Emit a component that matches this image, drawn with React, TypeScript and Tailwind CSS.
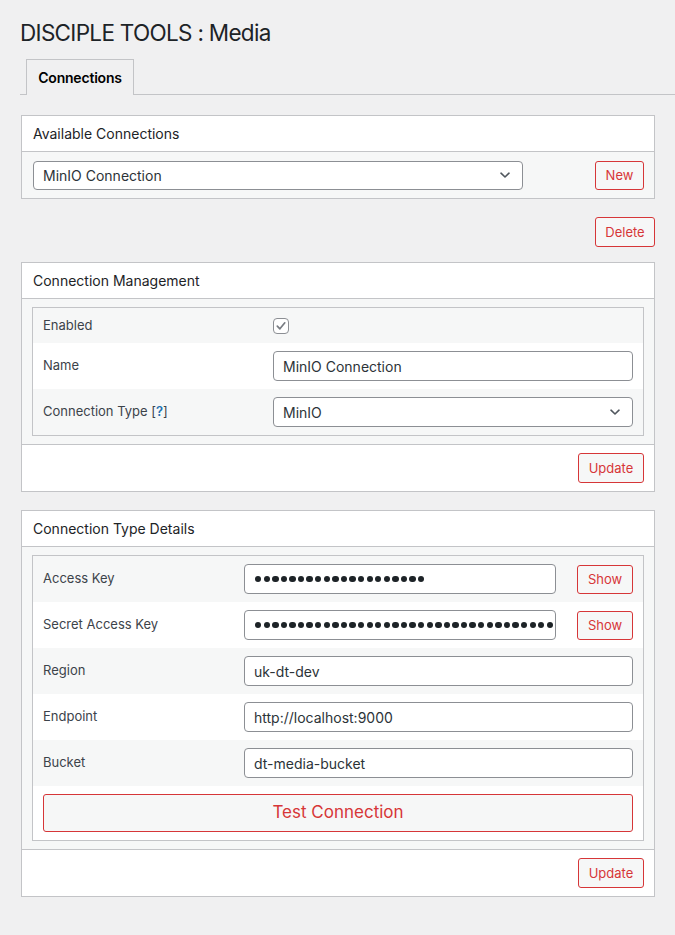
import React from "react";

const font = "font-['Inter','Noto_Sans',sans-serif]";

function cn(...c: (string | false | undefined)[]) {
  return c.filter(Boolean).join(" ");
}

function RedButton({ children, className }: { children: React.ReactNode; className?: string }) {
  return (
    <button
      type="button"
      className={cn(
        "h-[29px] rounded-[3px] border border-[#d63638] bg-[#f6f7f7] px-0 text-[13px] leading-none text-[#d63638]",
        className,
      )}
    >
      {children}
    </button>
  );
}

function Chevron() {
  return (
    <svg width="12" height="12" viewBox="0 0 12 12" className="absolute right-[11px] top-1/2 -translate-y-1/2">
      <path d="M2 4.2 L6 8 L10 4.2" fill="none" stroke="#50575e" strokeWidth="1.6" strokeLinecap="round" strokeLinejoin="round" />
    </svg>
  );
}

function FakeSelect({ value, className }: { value: string; className?: string }) {
  return (
    <div
      className={cn(
        "relative flex h-[29px] items-center rounded-[4px] border border-[#8c8f94] bg-white pl-[9px] text-[14px] text-[#2c3338]",
        className,
      )}
    >
      {value}
      <Chevron />
    </div>
  );
}

function TextBox({ value, className }: { value: string; className?: string }) {
  return (
    <div
      className={cn(
        "flex h-[30px] items-center overflow-hidden whitespace-nowrap rounded-[4px] border border-[#8c8f94] bg-white pl-[9px] text-[14px] text-[#2c3338]",
        className,
      )}
    >
      {value}
    </div>
  );
}

// password field: masked characters drawn as small dots
function SecretBox({ count, className }: { count: number; className?: string }) {
  return (
    <div
      className={cn(
        "flex h-[30px] items-center gap-[2.2px] overflow-hidden rounded-[4px] border border-[#8c8f94] bg-white pl-[10px]",
        className,
      )}
    >
      {Array.from({ length: count }).map((_, i) => (
        <span key={i} className="h-[6.4px] w-[6.4px] shrink-0 rounded-full bg-[#1d2327]" />
      ))}
    </div>
  );
}

function Panel({ title, children, footer }: { title: string; children: React.ReactNode; footer?: React.ReactNode }) {
  return (
    <div className="ml-px mr-[20px] border border-[#c3c4c7] bg-white">
      <div className="flex h-[36px] items-center border-b border-[#c3c4c7] px-[11px] text-[14px] text-[#1d2327]">
        {title}
      </div>
      {children}
      {footer && (
        <div className="flex h-[47px] items-center justify-end border-t border-[#c3c4c7] px-[10px]">{footer}</div>
      )}
    </div>
  );
}

function Row({ label, striped, children, tall = true }: { label: React.ReactNode; striped: boolean; children?: React.ReactNode; tall?: boolean }) {
  return (
    <div className={cn("flex items-center px-[10px]", tall ? "h-[46px]" : "h-[35px]", striped ? "bg-[#f6f7f7]" : "bg-white")}>
      {label}
      {children}
    </div>
  );
}

export default function App() {
  return (
    <div className={cn("min-h-[935px] bg-[#f0f0f1] pb-[20px] pl-[20px]", font)}>
      <h1 className="pt-[18px] text-[22.5px] leading-[29px] font-normal tracking-[-0.7px] text-[#1d2327]">
        DISCIPLE TOOLS : Media
      </h1>

      <div className="mt-[12px] flex border-b border-[#c3c4c7] pl-[6px]">
        <div className="-mb-px flex h-[36px] w-[108px] items-center justify-center border border-b-0 border-[#c3c4c7] bg-[#f0f0f1] text-[14px] font-semibold tracking-[-0.2px] text-black">
          Connections
        </div>
      </div>

      <div className="mt-[20px]">
        <Panel title="Available Connections">
          <div className="flex h-[46px] items-center justify-between bg-[#f6f7f7] pl-[11px] pr-[10px]">
            <FakeSelect value="MinIO Connection" className="w-[490px]" />
            <RedButton className="w-[49px]">New</RedButton>
          </div>
        </Panel>
      </div>

      <div className="mr-[20px] mt-[18px] flex justify-end">
        <RedButton className="h-[30px] w-[60px]">Delete</RedButton>
      </div>

      <div className="mt-[15px]">
        <Panel title="Connection Management" footer={<RedButton className="h-[30px] w-[66px]">Update</RedButton>}>
          <div className="bg-[#f6f7f7] px-[10px] py-[8px]">
            <div className="border border-[#c3c4c7]">
              <Row striped tall={false} label={<span className="w-[230px] text-[13px] text-[#3c434a]">Enabled</span>}>
                <div className="flex h-[16px] w-[16px] items-center justify-center rounded-[4px] border border-[#8c8f94] bg-white">
                  <svg width="12" height="12" viewBox="0 0 12 12">
                    <path d="M2.3 6.2 L4.9 8.8 L9.8 2.8" fill="none" stroke="#787c82" strokeWidth="1.7" strokeLinecap="round" strokeLinejoin="round" />
                  </svg>
                </div>
              </Row>
              <Row striped={false} label={<span className="w-[230px] text-[13px] text-[#3c434a]">Name</span>}>
                <TextBox value="MinIO Connection" className="flex-1" />
              </Row>
              <Row
                striped
                label={
                  <span className="w-[230px] text-[13px] text-[#3c434a]">
                    Connection Type [<span className="font-semibold text-[#2271b1]">?</span>]
                  </span>
                }
              >
                <FakeSelect value="MinIO" className="h-[30px] flex-1" />
              </Row>
            </div>
          </div>
        </Panel>
      </div>

      <div className="mt-[18px]">
        <Panel title="Connection Type Details" footer={<RedButton className="h-[30px] w-[66px]">Update</RedButton>}>
          <div className="bg-[#f6f7f7] px-[10px] py-[8px]">
            <div className="border border-[#c3c4c7]">
              <Row striped label={<span className="w-[201px] text-[13px] text-[#3c434a]">Access Key</span>}>
                <SecretBox count={20} className="w-[312px]" />
                <RedButton className="ml-auto w-[56px]">Show</RedButton>
              </Row>
              <Row striped={false} label={<span className="w-[201px] text-[13px] text-[#3c434a]">Secret Access Key</span>}>
                <SecretBox count={40} className="w-[312px]" />
                <RedButton className="ml-auto w-[56px]">Show</RedButton>
              </Row>
              <Row striped label={<span className="w-[201px] text-[13px] text-[#3c434a]">Region</span>}>
                <TextBox value="uk-dt-dev" className="flex-1" />
              </Row>
              <Row striped={false} label={<span className="w-[201px] text-[13px] text-[#3c434a]">Endpoint</span>}>
                <TextBox value="http://localhost:9000" className="flex-1" />
              </Row>
              <Row striped label={<span className="w-[201px] text-[13px] text-[#3c434a]">Bucket</span>}>
                <TextBox value="dt-media-bucket" className="flex-1" />
              </Row>
              <div className="bg-white px-[10px] py-[8px]">
                <button
                  type="button"
                  className="flex h-[38px] w-full items-center justify-center rounded-[3px] border border-[#d63638] bg-[#f6f7f7] text-[17px] text-[#d63638]"
                >
                  Test Connection
                </button>
              </div>
            </div>
          </div>
        </Panel>
      </div>
    </div>
  );
}
